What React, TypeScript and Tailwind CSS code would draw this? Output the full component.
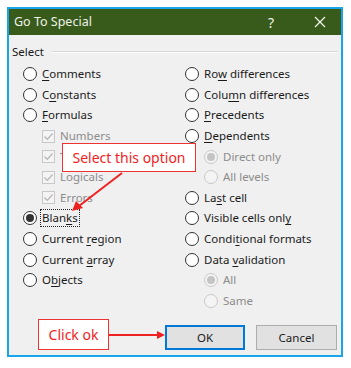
import React from 'react';

type Item = {
  label: React.ReactNode;
  kind: 'radio' | 'check' | 'subradio';
  checked?: boolean;
  disabled?: boolean;
  focus?: boolean;
};

const k = (s: string) => <u className="underline underline-offset-[2px] decoration-[1px]">{s}</u>;

const leftItems: Item[] = [
  { label: <>{k('C')}omments</>, kind: 'radio' },
  { label: <>C{k('o')}nstants</>, kind: 'radio' },
  { label: <>{k('F')}ormulas</>, kind: 'radio' },
  { label: 'Numbers', kind: 'check', checked: true, disabled: true },
  { label: 'Text', kind: 'check', checked: true, disabled: true },
  { label: 'Logicals', kind: 'check', checked: true, disabled: true },
  { label: 'Errors', kind: 'check', checked: true, disabled: true },
  { label: <>Blan{k('k')}s</>, kind: 'radio', checked: true, focus: true },
  { label: <>Current {k('r')}egion</>, kind: 'radio' },
  { label: <>Current {k('a')}rray</>, kind: 'radio' },
  { label: <>O{k('b')}jects</>, kind: 'radio' }
];

const rightItems: Item[] = [
  { label: <>Ro{k('w')} differences</>, kind: 'radio' },
  { label: <>Colu{k('m')}n differences</>, kind: 'radio' },
  { label: <>{k('P')}recedents</>, kind: 'radio' },
  { label: <>{k('D')}ependents</>, kind: 'radio' },
  { label: 'Direct only', kind: 'subradio', checked: true, disabled: true },
  { label: 'All levels', kind: 'subradio', disabled: true },
  { label: <>La{k('s')}t cell</>, kind: 'radio' },
  { label: <>Visible cells onl{k('y')}</>, kind: 'radio' },
  { label: <>Condi{k('t')}ional formats</>, kind: 'radio' },
  { label: <>Data {k('v')}alidation</>, kind: 'radio' },
  { label: 'All', kind: 'subradio', checked: true, disabled: true },
  { label: 'Same', kind: 'subradio', disabled: true }
];

const Radio = ({ checked, disabled }: { checked?: boolean; disabled?: boolean }) => (
  <span
    className={`w-[14px] h-[14px] rounded-full border flex items-center justify-center shrink-0 ${
      disabled ? 'border-[#c8c8c8] bg-[#f4f4f4]' : 'border-[#333333] bg-white'
    }`}
  >
    {checked && (
      <span className={`w-[8px] h-[8px] rounded-full ${disabled ? 'bg-[#c4c4c4]' : 'bg-[#333333]'}`}></span>
    )}
  </span>
);

const Check = () => (
  <span className="w-[13px] h-[13px] border border-[#c8c8c8] bg-[#f4f4f4] flex items-center justify-center shrink-0">
    <svg width="11" height="11" viewBox="0 0 11 11">
      <path d="M1.5 5.5 L4.3 8.3 L9.5 2.5" fill="none" stroke="#b4b4b4" strokeWidth="1.2" />
    </svg>
  </span>
);

const Row = ({ item }: { item: Item }) => (
  <div className={`h-[20.6px] flex items-center gap-[5px] ${item.kind === 'radio' ? '' : 'pl-[19px]'}`}>
    {item.kind === 'check' ? <Check /> : <Radio checked={item.checked} disabled={item.disabled} />}
    <span
      className={`leading-[16px] ${item.disabled ? 'text-[#8c8c8c]' : 'text-[#1a1a1a]'} ${
        item.focus ? 'outline-1 outline-dotted outline-[#222] px-[1px] -ml-[1px]' : ''
      }`}
    >
      {item.label}
    </span>
  </div>
);

const App = () => {
  return (
    <div
      className="relative w-[351px] h-[368px] bg-white pt-[7px] pl-[7px] text-[11.5px]"
      style={{ fontFamily: '"Noto Sans", "Open Sans", sans-serif' }}
    >
      <div className="w-[336px] h-[350px] border-2 border-[#1aa4ea] flex flex-col">
        {/* Title bar */}
        <div className="h-[26px] bg-[#385b1b] flex items-center pl-[5px] pr-[15px] text-[#eef2e9] text-[12.5px]">
          <span>Go To Special</span>
          <span className="ml-auto mr-[40px] text-[14px]">?</span>
          <svg width="12" height="12" viewBox="0 0 12 12">
            <path d="M1 1 L11 11 M11 1 L1 11" stroke="#eef2e9" strokeWidth="1.3" />
          </svg>
        </div>

        {/* Body */}
        <div className="flex-1 bg-[#f0f0f0] flex flex-col">
          <div className="mt-[8px] h-[18px] flex items-center pl-[3px] pr-[3px] gap-[8px]">
            <span className="text-[#1a1a1a]">Select</span>
            <span className="flex-1 h-[2px] border-t border-[#d6d6d6] border-b-white border-b"></span>
          </div>

          <div className="mt-[3px] pl-[14px] grid grid-cols-[162px_1fr]">
            <div className="flex flex-col">
              {leftItems.map((it, i) => (
                <Row key={i} item={it} />
              ))}
            </div>
            <div className="flex flex-col">
              {rightItems.map((it, i) => (
                <Row key={i} item={it} />
              ))}
            </div>
          </div>

          <div className="mt-auto mb-[5px] mr-[4px] flex justify-end gap-[11px]">
            <button className="w-[80px] h-[25px] bg-[#e1e1e1] border-2 border-[#0078d7] text-[#1a1a1a]">OK</button>
            <button className="w-[81px] h-[25px] bg-[#e1e1e1] border border-[#adadad] text-[#1a1a1a]">Cancel</button>
          </div>
        </div>
      </div>

      {/* Annotations */}
      <div className="absolute left-[62px] top-[143px] w-[134px] h-[29px] bg-white border border-[#ee3333] flex items-center justify-center text-[#f21d24] text-[14px]">
        Select this option
      </div>
      <div className="absolute left-[38px] top-[319px] w-[71px] h-[31px] bg-white border border-[#ee3333] flex items-center justify-center text-[#f21d24] text-[14px]">
        Click ok
      </div>
      <svg className="absolute left-0 top-0 pointer-events-none" width="351" height="368" viewBox="0 0 351 368">
        <line x1="122" y1="173" x2="79" y2="206" stroke="#ee2222" strokeWidth="2" />
        <polygon points="72,211 76,201 83,208" fill="#ee2222" />
        <line x1="109" y1="335" x2="158" y2="335" stroke="#ee2222" strokeWidth="2" />
        <polygon points="165,335 157,331 157,339" fill="#ee2222" />
      </svg>
    </div>
  );
};

export default App;
